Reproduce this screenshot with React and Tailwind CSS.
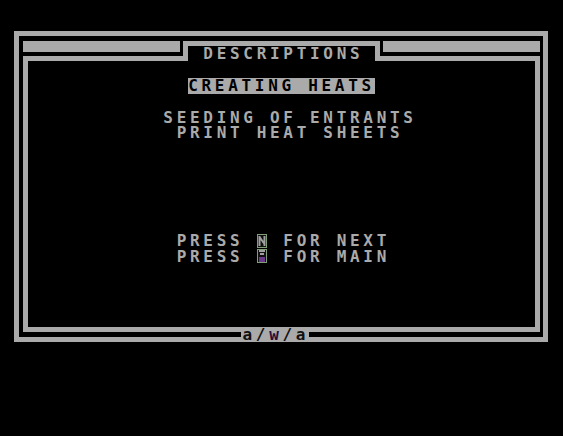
import React from 'react';

// Little inverse "key" glyphs used in the PRESS lines
const KeyN = () => (
  <span className="inline-block w-[13.33px] h-[16px] align-top">
    <svg width="13" height="16" viewBox="0 0 13 16">
      <rect x="0.5" y="1.5" width="9" height="13" fill="#101010" stroke="#7f9f78" strokeWidth="1" />
      <path d="M2.5 3v10M7.5 3v10M2.5 4l5 7" stroke="#a0a0a0" strokeWidth="2" fill="none" />
    </svg>
  </span>
);

const KeyM = () => (
  <span className="inline-block w-[13.33px] h-[16px] align-top">
    <svg width="13" height="16" viewBox="0 0 13 16">
      <rect x="0.5" y="0.5" width="9" height="13" fill="#101010" stroke="#7f9f78" strokeWidth="1" />
      <path d="M2 2h6M3 5h4" stroke="#a0a0a0" strokeWidth="2" fill="none" />
      <rect x="2" y="8" width="6" height="5" fill="#6a3a8a" />
    </svg>
  </span>
);

const Bar = ({ className = '' }) => <div className={`bg-[#aaaaaa] ${className}`} />;

export default function App() {
  return (
    <div className="w-[563px] h-[436px] bg-black pt-[31px] pl-[14px] font-['DejaVu_Sans_Mono',monospace] font-bold text-[16px] leading-[15.5px] tracking-[3.7px] text-[#aaaaaa]">
      <div className="relative w-[534px] h-[311px] border-[5px] border-[#aaaaaa] pt-[5px] pl-[4px] pr-[3px] pb-[5px] flex flex-col">
        {/* header: side bars and the title tab */}
        <div className="flex h-[20px]">
          <div className="flex-1 flex flex-col">
            <Bar className="h-[11px] mr-[3px]" />
            <Bar className="h-[5px] mt-[4px]" />
          </div>
          <div className="w-[197px] border-[5px] border-b-0 border-[#aaaaaa] flex justify-center">
            <span className="pl-[3.7px]">DESCRIPTIONS</span>
          </div>
          <div className="flex-1 flex flex-col">
            <Bar className="h-[11px] ml-[3px]" />
            <Bar className="h-[5px] mt-[4px]" />
          </div>
        </div>

        {/* main panel */}
        <div className="flex-1 border-[5px] border-t-0 border-[#aaaaaa] flex flex-col items-center">
          <span className="mt-[17.25px] bg-[#aaaaaa] text-black">CREATING HEATS</span>

          <div className="mt-[16.25px] flex flex-col items-center leading-[15px]">
            <span className="pl-[17px]">SEEDING OF ENTRANTS</span>
            <span className="pl-[17px]">PRINT HEAT SHEETS</span>
          </div>

          <div className="mt-[93px] flex flex-col items-center leading-[16px]">
            <span className="pl-[3.7px] whitespace-pre">
              PRESS <KeyN /> FOR NEXT
            </span>
            <span className="pl-[3.7px] whitespace-pre">
              PRESS <KeyM /> FOR MAIN
            </span>
          </div>
        </div>

        {/* footer tag over the bottom rails */}
        <span className="absolute left-[222px] -bottom-[5px] h-[15.5px] pl-[1.5px] bg-[#aaaaaa] text-[#111111]">
          a/<span className="text-[#2a0c3a]">w</span>/a
        </span>
      </div>
    </div>
  );
}
